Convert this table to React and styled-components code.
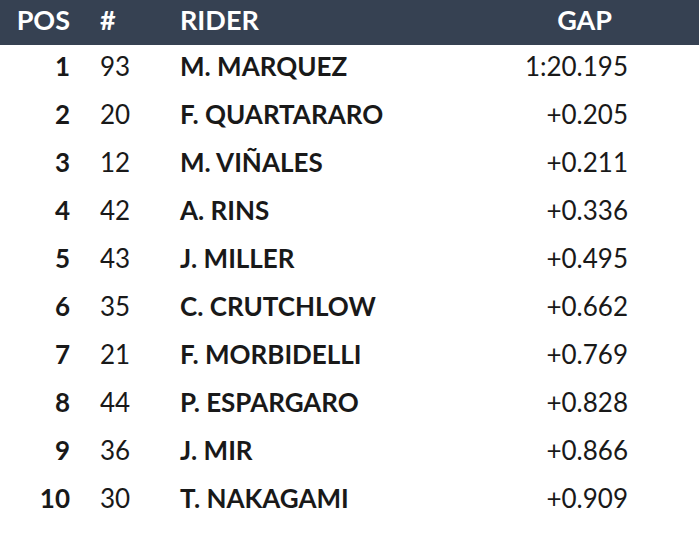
import React from "react";
import styled, { createGlobalStyle } from "styled-components";

const Global = createGlobalStyle`
  html, body { margin: 0; padding: 0; background: #fff; }
  body { font-family: "Lato", "Liberation Sans", sans-serif; }
`;

const Table = styled.div`
  width: 699px;
`;

const HeaderRow = styled.div`
  display: grid;
  grid-template-columns: 70px 30px 80px 1fr 150px 87px;
  box-sizing: border-box;
  height: 45px;
  padding-bottom: 6px;
  align-items: center;
  background: #364152;
  color: #fff;
  font-size: 27px;
`;

const Row = styled.div`
  display: grid;
  grid-template-columns: 70px 30px 80px 1fr 150px 71px;
  box-sizing: border-box;
  height: 48px;
  padding-bottom: 6px;
  align-items: center;
  color: #191919;
  font-size: 26px;
`;

const Cell = styled.div`
  text-align: ${(p) => p.$align || "left"};
  font-weight: ${(p) => (p.$bold ? 700 : 400)};
  white-space: nowrap;
  grid-column: ${(p) => p.$col};
`;

const data = [
  [1, 93, "M. MARQUEZ", "1:20.195"],
  [2, 20, "F. QUARTARARO", "+0.205"],
  [3, 12, "M. VIÑALES", "+0.211"],
  [4, 42, "A. RINS", "+0.336"],
  [5, 43, "J. MILLER", "+0.495"],
  [6, 35, "C. CRUTCHLOW", "+0.662"],
  [7, 21, "F. MORBIDELLI", "+0.769"],
  [8, 44, "P. ESPARGARO", "+0.828"],
  [9, 36, "J. MIR", "+0.866"],
  [10, 30, "T. NAKAGAMI", "+0.909"],
];

export default function App() {
  return (
    <Table>
      <Global />
      <HeaderRow>
        <Cell $col="1" $align="right" $bold>POS</Cell>
        <Cell $col="3" $bold>#</Cell>
        <Cell $col="4" $bold>RIDER</Cell>
        <Cell $col="5" $align="right" $bold>GAP</Cell>
      </HeaderRow>
      {data.map(([pos, num, rider, gap]) => (
        <Row key={pos}>
          <Cell $col="1" $align="right" $bold>{pos}</Cell>
          <Cell $col="3">{num}</Cell>
          <Cell $col="4" $bold>{rider}</Cell>
          <Cell $col="5" $align="right">{gap}</Cell>
        </Row>
      ))}
    </Table>
  );
}
